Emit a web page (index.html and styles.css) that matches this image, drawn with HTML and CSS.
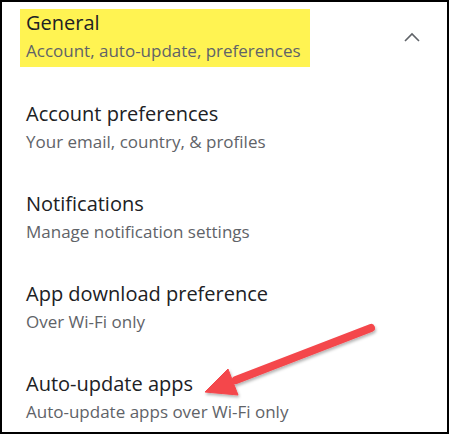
FILE: index.html
```html
<!DOCTYPE html>
<html>
<head>
<meta charset="utf-8">
<link rel="stylesheet" href="styles.css">
</head>
<body>
<div class="frame">
  <div class="header">
    <div class="highlight">
      <div class="title">General</div>
      <div class="subtitle">Account, auto-update, preferences</div>
    </div>
    <svg class="chevron" width="24" height="24" viewBox="0 0 24 24">
      <polyline points="5,13 12,6 19,13" fill="none" stroke="#5f6368" stroke-width="1.6"/>
    </svg>
  </div>
  <div class="list">
    <div class="item">
      <div class="title">Account preferences</div>
      <div class="subtitle">Your email, country, &amp; profiles</div>
    </div>
    <div class="item">
      <div class="title">Notifications</div>
      <div class="subtitle">Manage notification settings</div>
    </div>
    <div class="item">
      <div class="title">App download preference</div>
      <div class="subtitle">Over Wi-Fi only</div>
    </div>
    <div class="item">
      <div class="title">Auto-update apps</div>
      <div class="subtitle">Auto-update apps over Wi-Fi only</div>
    </div>
  </div>
  <svg class="arrow" width="449" height="435" viewBox="0 0 449 435">
    <defs>
      <filter id="sh" x="-20%" y="-20%" width="140%" height="140%">
        <feDropShadow dx="1" dy="2" stdDeviation="1.5" flood-color="#000" flood-opacity="0.3"/>
      </filter>
    </defs>
    <g filter="url(#sh)" fill="#f4464c" stroke="#f4464c">
      <line x1="371" y1="328" x2="236" y2="380" stroke-width="8" stroke-linecap="round"/>
      <polygon points="205,392 228,369 238,395" stroke-width="1" stroke-linejoin="round"/>
    </g>
  </svg>
</div>
</body>
</html>
```
FILE: styles.css
```css
html, body {
  margin: 0;
  padding: 0;
  background: #fff;
}
.frame {
  position: relative;
  width: 449px;
  height: 434px;
  box-sizing: border-box;
  border: 2px solid #000;
  overflow: hidden;
  font-family: "Open Sans", Roboto, sans-serif;
}
.header {
  display: flex;
  align-items: flex-start;
  justify-content: space-between;
  padding: 7px 23px 0 18px;
}
.highlight {
  background: #fff352;
  padding: 0 9px 3px 6px;
}
.chevron {
  margin-top: 19px;
}
.title {
  font-size: 20px;
  line-height: 28px;
  color: #202124;
}
.subtitle {
  font-size: 17px;
  line-height: 26px;
  margin-top: 1px;
  color: #5f6368;
}
.list {
  display: flex;
  flex-direction: column;
  padding-left: 24px;
  margin-top: 16px;
}
.item {
  padding: 17px 0 18px;
}
.arrow {
  position: absolute;
  left: -2px;
  top: -2px;
  pointer-events: none;
}
```
